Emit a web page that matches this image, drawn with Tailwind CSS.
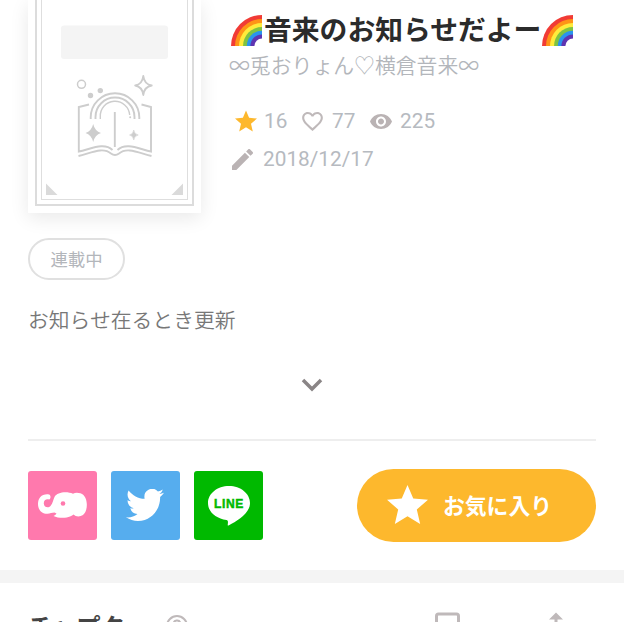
<!DOCTYPE html>
<html lang="ja">
<head>
<meta charset="utf-8">
<title>音来のお知らせだよー</title>
<script src="https://cdn.jsdelivr.net/npm/@tailwindcss/browser@4"></script>
</head>
<body class="bg-white overflow-hidden w-[624px] h-[622px] font-['Noto_Sans_CJK_JP',sans-serif]">
<svg class="hidden">
  <symbol id="rainbow" viewBox="0 0 31 31">
    <path d="M0 31A31 31 0 0 1 31 0V31Z" fill="#f13b35"/>
    <path d="M4 31A27 27 0 0 1 31 4V31Z" fill="#ff9416"/>
    <path d="M8 31A23 23 0 0 1 31 8V31Z" fill="#ffeb3b"/>
    <path d="M12 31A19 19 0 0 1 31 12V31Z" fill="#7fc342"/>
    <path d="M15.8 31A15.2 15.2 0 0 1 31 15.8V31Z" fill="#2994ee"/>
    <path d="M19.4 31A11.6 11.6 0 0 1 31 19.4V31Z" fill="#5e35b1"/>
    <path d="M23.4 31A7.6 7.6 0 0 1 31 23.4V31Z" fill="#fff"/>
  </symbol>
  <symbol id="star" viewBox="2 2 20 19">
    <path d="M12 17.27 18.18 21l-1.64-7.03L22 9.24l-7.19-.61L12 2 9.19 8.63 2 9.24l5.46 4.73L5.82 21z"/>
  </symbol>
</svg>

<main>
  <header class="flex h-[213px] pl-7">
    <div class="w-[173px] h-[213px] shrink-0 bg-white px-[7px] pb-[7px] shadow-[0_5px_18px_rgba(0,0,0,0.09)]">
      <div class="h-full border-2 border-t-0 border-[#dcdcdc] px-[4px] pb-[4px]">
        <div class="h-full border-[1.5px] border-t-0 border-[#dedede]">
          <svg class="block w-[145px] h-[199px]" viewBox="42 0 145 199" fill="none" stroke="#cdcdcd" stroke-width="1.9">
            <rect x="61" y="25.5" width="107" height="33.5" rx="3" fill="#f4f4f4" stroke="none"/>
            <circle cx="81.5" cy="84.3" r="4" stroke-width="1.5"/>
            <g fill="#cdcdcd" stroke="none">
              <circle cx="90.5" cy="95.5" r="2.7"/><circle cx="100.3" cy="90.6" r="2.7"/>
              <path d="M93.200 124Q94.800 131 101 133Q94.800 135 93.200 142Q91.500 135 85.500 133Q91.500 131 93.200 124Z"/>
              <path d="M133.800 130Q134.300 134.300 138.300 135Q134.300 135.700 133.800 140Q133 135.700 129.500 135Q133 134.300 133.800 130Z" stroke="#cdcdcd" stroke-width=".5"/>
              <circle cx="130.200" cy="117.300" r="1"/>
              <path d="M46 183.500V195H57.500ZM183 183.500V195H171.500Z" fill="#dadada"/>
            </g>
            <path d="M143.300 76Q144.300 84.300 151.700 85.500Q144.300 86.700 143.300 95Q142.300 86.700 135.200 85.500Q142.300 84.300 143.300 76Z" stroke-linejoin="round"/>
            <path d="M90.700 119V117.500A24.300 24.300 0 0 1 139.300 117.500V119M95.500 119V117A19.500 19.500 0 0 1 134.500 117V119"/>
            <path d="M100.300 119V117A14.700 14.700 0 0 1 129.700 115" stroke-width="1.400"/>
            <path d="M89 104.500L78.800 107V151.500C91 149 104 142 112.500 150M141.500 104.500L151 107V151.500C139 149 126 142 117.500 150M114.800 112V147M78.500 156C91 153 103 146.500 111 153.500Q115 156.500 119 153.500C127 146.500 139 153 151.500 156"/>
          </svg>
        </div>
      </div>
    </div>
    <div class="pl-7 pt-[7px]">
      <h1 class="flex items-center h-[42px] text-[27.800px] leading-[42px] font-bold text-[#2b2b2b] whitespace-nowrap">
        <svg class="w-[31px] h-[31px] ml-[2px] mr-[2px] mt-[4px] shrink-0"><use href="#rainbow"/></svg><span class="-mt-[1px]">音来のお知らせだよー</span><svg class="w-[31px] h-[31px] ml-[1px] mt-[4px] shrink-0"><use href="#rainbow"/></svg>
      </h1>
      <p class="mt-[1px] h-[30px] text-[20.850px] leading-[29px] font-[350] text-[#b3b6bb] whitespace-nowrap">∞兎おりょん♡横倉音来∞</p>
      <div class="mt-[26px] flex items-center h-[30px] font-[Roboto,sans-serif] text-[20.800px] leading-[30px] text-[#b6bac0]">
        <svg class="w-[22px] h-[22px] ml-[6px] mr-[7px] fill-[#fdb82d]"><use href="#star"/></svg>
        <span class="w-[38px]">16</span>
        <svg class="w-[21px] h-[19px] mr-[9px]" viewBox="2 3 20 18.350" fill="#bfb9ba"><path d="M16.500 3c-1.740 0-3.410.81-4.500 2.090C10.910 3.810 9.240 3 7.500 3 4.420 3 2 5.420 2 8.500c0 3.780 3.400 6.860 8.550 11.540L12 21.350l1.450-1.320C18.600 15.360 22 12.280 22 8.500 22 5.420 19.580 3 16.500 3zm-4.400 15.550l-.1.100-.1-.1C7.140 14.240 4 11.390 4 8.500 4 6.500 5.500 5 7.500 5c1.540 0 3.040.99 3.570 2.360h1.870C13.460 5.990 14.960 5 16.500 5c2 0 3.500 1.500 3.500 3.500 0 2.890-3.140 5.740-7.900 10.050z"/></svg>
        <span class="w-[38px]">77</span>
        <svg class="w-[22px] h-[15px] mr-[8px]" viewBox="1 4.500 22 15" fill="#bab3b4"><path d="M12 4.500C7 4.500 2.730 7.610 1 12c1.730 4.390 6 7.500 11 7.500s9.270-3.110 11-7.500c-1.730-4.390-6-7.500-11-7.500zM12 17c-2.760 0-5-2.240-5-5s2.240-5 5-5 5 2.240 5 5-2.240 5-5 5zm0-8c-1.660 0-3 1.340-3 3s1.340 3 3 3 3-1.340 3-3-1.340-3-3-3z"/></svg>
        <span>225</span>
      </div>
      <div class="mt-[8px] flex items-center h-[30px] font-[Roboto,sans-serif] text-[20.800px] leading-[30px] text-[#b6bac0]">
        <svg class="w-[21px] h-[21px] ml-[3px] mr-[10px]" viewBox="3 3 18 18" fill="#bab3b4"><path d="M3 17.250V21h3.750L17.810 9.940l-3.750-3.750L3 17.250zM20.710 7.040c.39-.39.39-1.020 0-1.410l-2.340-2.340c-.39-.39-1.020-.39-1.410 0l-1.830 1.830 3.750 3.750 1.830-1.830z"/></svg>
        <span>2018/12/17</span>
      </div>
    </div>
  </header>

  <section class="px-7">
    <div class="mt-[25px] w-[97px] h-[42px] rounded-full border-2 border-[#e0e0e0] flex items-center justify-center text-[17.400px] text-[#b3b6bb]">連載中</div>
    <p class="mt-[23px] h-[33px] leading-[32px] text-[20.800px] font-[350] text-[#777]">お知らせ在るとき更新</p>
    <div class="flex justify-center pt-[42px] h-[103px]">
      <svg class="w-[22px] h-[14px]" viewBox="0 0 22 14" fill="none" stroke="#8a8586" stroke-width="3.500"><path d="M2 2L11 11L20 2"/></svg>
    </div>
    <div class="h-[2px] bg-[#eee]"></div>
    <div class="flex items-center justify-between h-[73px] mt-[28px]">
      <div class="flex gap-[14px]">
        <div class="size-[69px] rounded-[3px] bg-[#ff79ad] flex items-center justify-center">
          <svg class="w-[49px] h-[26px] -mt-[2px]" viewBox="0 0 49 26"><path d="M11 2.500C4 1.500 0 6 0 12C0 18 4 22 9.500 21.800C12 21.600 14 20.500 16.500 20.500L18.500 21.500Q17.500 23 15.500 24C20 26.300 28 26.500 32 24.500Q34.500 23.500 35.500 22.500C38 25 42 25 45 23C48 20.500 49 16 48.800 12C48.500 6 46 1.500 40.500 1Q37.500 .5 35 1.800C29-1 19 0 16.500 5C15 8 15 11 12.500 14C10.500 16.500 6 15.500 5.800 11.500C5.700 8.500 8 6.700 11 7.500C13 7 13 3 11 2.500Z" fill="#fff"/><circle cx="25" cy="11.500" r="2.300" fill="#ff79ad"/></svg>
        </div>
        <div class="size-[69px] rounded-[3px] bg-[#56adee] flex items-center justify-center">
          <svg class="w-[38px] h-[32px] mr-[1px] -mt-[1px]" viewBox="0 2.300 24 19.500" preserveAspectRatio="none" fill="#fff"><path d="M23.953 4.570a10 10 0 0 1-2.825.775 4.958 4.958 0 0 0 2.163-2.723c-.951.555-2.005.959-3.127 1.184a4.920 4.920 0 0 0-8.384 4.482C7.690 8.095 4.067 6.130 1.640 3.162a4.822 4.822 0 0 0-.666 2.475c0 1.710.87 3.213 2.188 4.096a4.904 4.904 0 0 1-2.228-.616v.06a4.923 4.923 0 0 0 3.946 4.827 4.996 4.996 0 0 1-2.212.085 4.936 4.936 0 0 0 4.604 3.417 9.867 9.867 0 0 1-6.102 2.105c-.39 0-.779-.023-1.170-.067a13.995 13.995 0 0 0 7.557 2.209c9.053 0 13.998-7.496 13.998-13.985 0-.21 0-.42-.015-.63A9.935 9.935 0 0 0 24 4.590z"/></svg>
        </div>
        <div class="size-[69px] rounded-[3px] bg-[#00b900] flex items-center justify-center">
          <svg class="w-[42px] h-[40px]" viewBox="0 0 42 40"><path d="M21 0C9.400 0 0 7.500 0 17C0 26 8 32.500 18.500 34C20 34.300 20.200 35.500 19.700 39Q19.700 40 21 39.300C29 35 42 27.500 42 17C42 7.500 32.600 0 21 0Z" fill="#fff"/><text x="6" y="22" textLength="30" lengthAdjust="spacingAndGlyphs" font-family="Liberation Sans, sans-serif" font-weight="700" font-size="13.500" letter-spacing=".7" fill="#00b900" stroke="#00b900" stroke-width=".5">LINE</text></svg>
        </div>
      </div>
      <button class="w-[239px] h-[73px] rounded-full bg-[#fdb82d] flex items-center pl-[30px] text-white text-[21.800px] font-bold">
        <svg class="w-[41px] h-[39px] mr-[15px] -mt-[2px] fill-white"><use href="#star"/></svg>
        <span>お気に入り</span>
      </button>
    </div>
  </section>

  <div class="mt-[28px] h-[13px] bg-[#f4f4f4]"></div>
  <section class="flex items-start h-[39px] px-7 pt-[29px] overflow-hidden">
    <h2 class="w-[138px] -mt-[4px] text-[24.300px] leading-[36px] font-bold text-[#444] whitespace-nowrap">チャプター</h2>
    <svg class="w-[22px] h-[22px] mt-[3px]" viewBox="0 0 22 22" fill="none" stroke="#bfb9ba" stroke-width="2"><circle cx="11" cy="11" r="10"/><path d="M7.500 9a3.500 3.500 0 1 1 5 3.200L11 14"/></svg>
    <svg class="w-[25px] h-[24px] ml-[247px]" viewBox="0 0 25 24" fill="none" stroke="#bfb9ba" stroke-width="3"><rect x="1.500" y="2" width="22" height="21" rx="2"/></svg>
    <svg class="w-[14px] h-[24px] ml-[89px]" viewBox="0 0 14 24" fill="#bfb9ba"><path d="M7 .5L14 7.500H8.500V24H5.500V7.500H0Z"/></svg>
  </section>
</main>
</body>
</html>
